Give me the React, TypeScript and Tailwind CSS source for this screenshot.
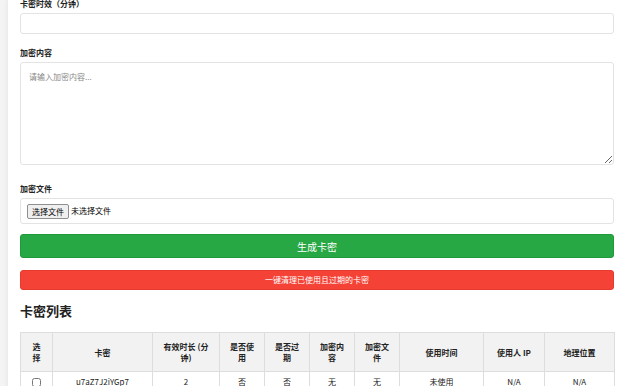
import React from 'react';

type CardKey = {
  code: string;
  minutes: number;
  used: boolean;
  expired: boolean;
  hasContent: boolean;
  hasFile: boolean;
  usedAt: string | null;
  ip: string | null;
  location: string | null;
};

const keys: CardKey[] = [
  {
    code: 'u7aZ7J2iYGp7',
    minutes: 2,
    used: false,
    expired: false,
    hasContent: false,
    hasFile: false,
    usedAt: null,
    ip: null,
    location: null,
  },
];

const columns = [
  { title: '选择', width: 'w-[32px]' },
  { title: '卡密', width: 'w-[100px]' },
  { title: '有效时长 (分钟)', width: 'w-[67px]' },
  { title: '是否使用', width: 'w-[45px]' },
  { title: '是否过期', width: 'w-[45px]' },
  { title: '加密内容', width: 'w-[45px]' },
  { title: '加密文件', width: 'w-[45px]' },
  { title: '使用时间', width: 'w-[84px]' },
  { title: '使用人 IP', width: 'w-[61px]' },
  { title: '地理位置', width: 'w-[70px]' },
];

const Label = ({ children }: { children: React.ReactNode }) => (
  <div className="text-[8px] leading-[10px] font-bold text-[#222] mb-[4px]">{children}</div>
);

const KeyTable = () => (
  <table className="w-[594px] table-fixed border-collapse text-[8px] leading-[11px] text-[#222]">
    <colgroup>
      {columns.map((c) => (
        <col key={c.title} className={c.width} />
      ))}
    </colgroup>
    <thead>
      <tr className="bg-[#f2f2f2]">
        {columns.map((c) => (
          <th
            key={c.title}
            className="border border-[#dddddd] px-[9px] py-[8px] font-bold text-center align-middle h-[38px]"
          >
            {c.title}
          </th>
        ))}
      </tr>
    </thead>
    <tbody>
      {keys.map((k) => (
        <tr key={k.code} className="bg-white">
          <td className="border border-[#dddddd] px-[9px] py-[4px] text-center">
            <input type="checkbox" className="w-[9px] h-[9px] align-middle" />
          </td>
          <td className="border border-[#dddddd] px-[9px] py-[4px] text-center">{k.code}</td>
          <td className="border border-[#dddddd] px-[9px] py-[4px] text-center">{k.minutes}</td>
          <td className="border border-[#dddddd] px-[9px] py-[4px] text-center">{k.used ? '是' : '否'}</td>
          <td className="border border-[#dddddd] px-[9px] py-[4px] text-center">{k.expired ? '是' : '否'}</td>
          <td className="border border-[#dddddd] px-[9px] py-[4px] text-center">{k.hasContent ? '有' : '无'}</td>
          <td className="border border-[#dddddd] px-[9px] py-[4px] text-center">{k.hasFile ? '有' : '无'}</td>
          <td className="border border-[#dddddd] px-[9px] py-[4px] text-center">{k.usedAt ?? '未使用'}</td>
          <td className="border border-[#dddddd] px-[9px] py-[4px] text-center">{k.ip ?? 'N/A'}</td>
          <td className="border border-[#dddddd] px-[9px] py-[4px] text-center">{k.location ?? 'N/A'}</td>
        </tr>
      ))}
    </tbody>
  </table>
);

export default function App() {
  return (
    <div
      className="min-h-screen bg-[#f4f4f4] pl-[8px] overflow-hidden"
      style={{ fontFamily: '"Noto Sans CJK SC", "Noto Sans", sans-serif' }}
    >
      <div className="bg-white shadow-[0_0_6px_rgba(0,0,0,0.08)] pl-[12px] pr-[12px] -mt-[1px] pb-6">
        {/* 卡密时效 */}
        <Label>卡密时效（分钟）</Label>
        <input
          type="text"
          className="block w-[594px] h-[21px] border border-[#e3e3e3] rounded-[3px] bg-white outline-none"
        />

        <div className="mt-[14px]">
          <Label>加密内容</Label>
          <textarea
            placeholder="请输入加密内容..."
            className="block w-[594px] h-[103px] border border-[#e3e3e3] rounded-[3px] px-[8px] py-[8px] text-[8px] leading-[11px] placeholder:text-[#888] outline-none"
          />
        </div>

        <div className="mt-[19px]">
          <Label>加密文件</Label>
          <div className="w-[594px] h-[26px] border border-[#e3e3e3] rounded-[3px] flex items-center px-[6px] gap-[2px]">
            <span className="border border-[#8f8f8f] bg-[#efefef] rounded-[2px] px-[4px] text-[8px] leading-[13px] text-black">
              选择文件
            </span>
            <span className="text-[8px] text-black">未选择文件</span>
          </div>
        </div>

        <button className="mt-[10px] block w-[594px] h-[24px] bg-[#28a745] border border-[#1f9a3a] rounded-[3px] text-white text-[10px]">
          生成卡密
        </button>

        <button className="mt-[12px] block w-[594px] h-[20px] bg-[#f44336] border border-[#e53a2d] rounded-[3px] text-white text-[8px]">
          一键清理已使用且过期的卡密
        </button>

        <h2 className="mt-[13px] text-[13px] leading-[16px] font-bold text-[#222]">卡密列表</h2>

        <div className="mt-[13px]">
          <KeyTable />
        </div>
      </div>
    </div>
  );
}
